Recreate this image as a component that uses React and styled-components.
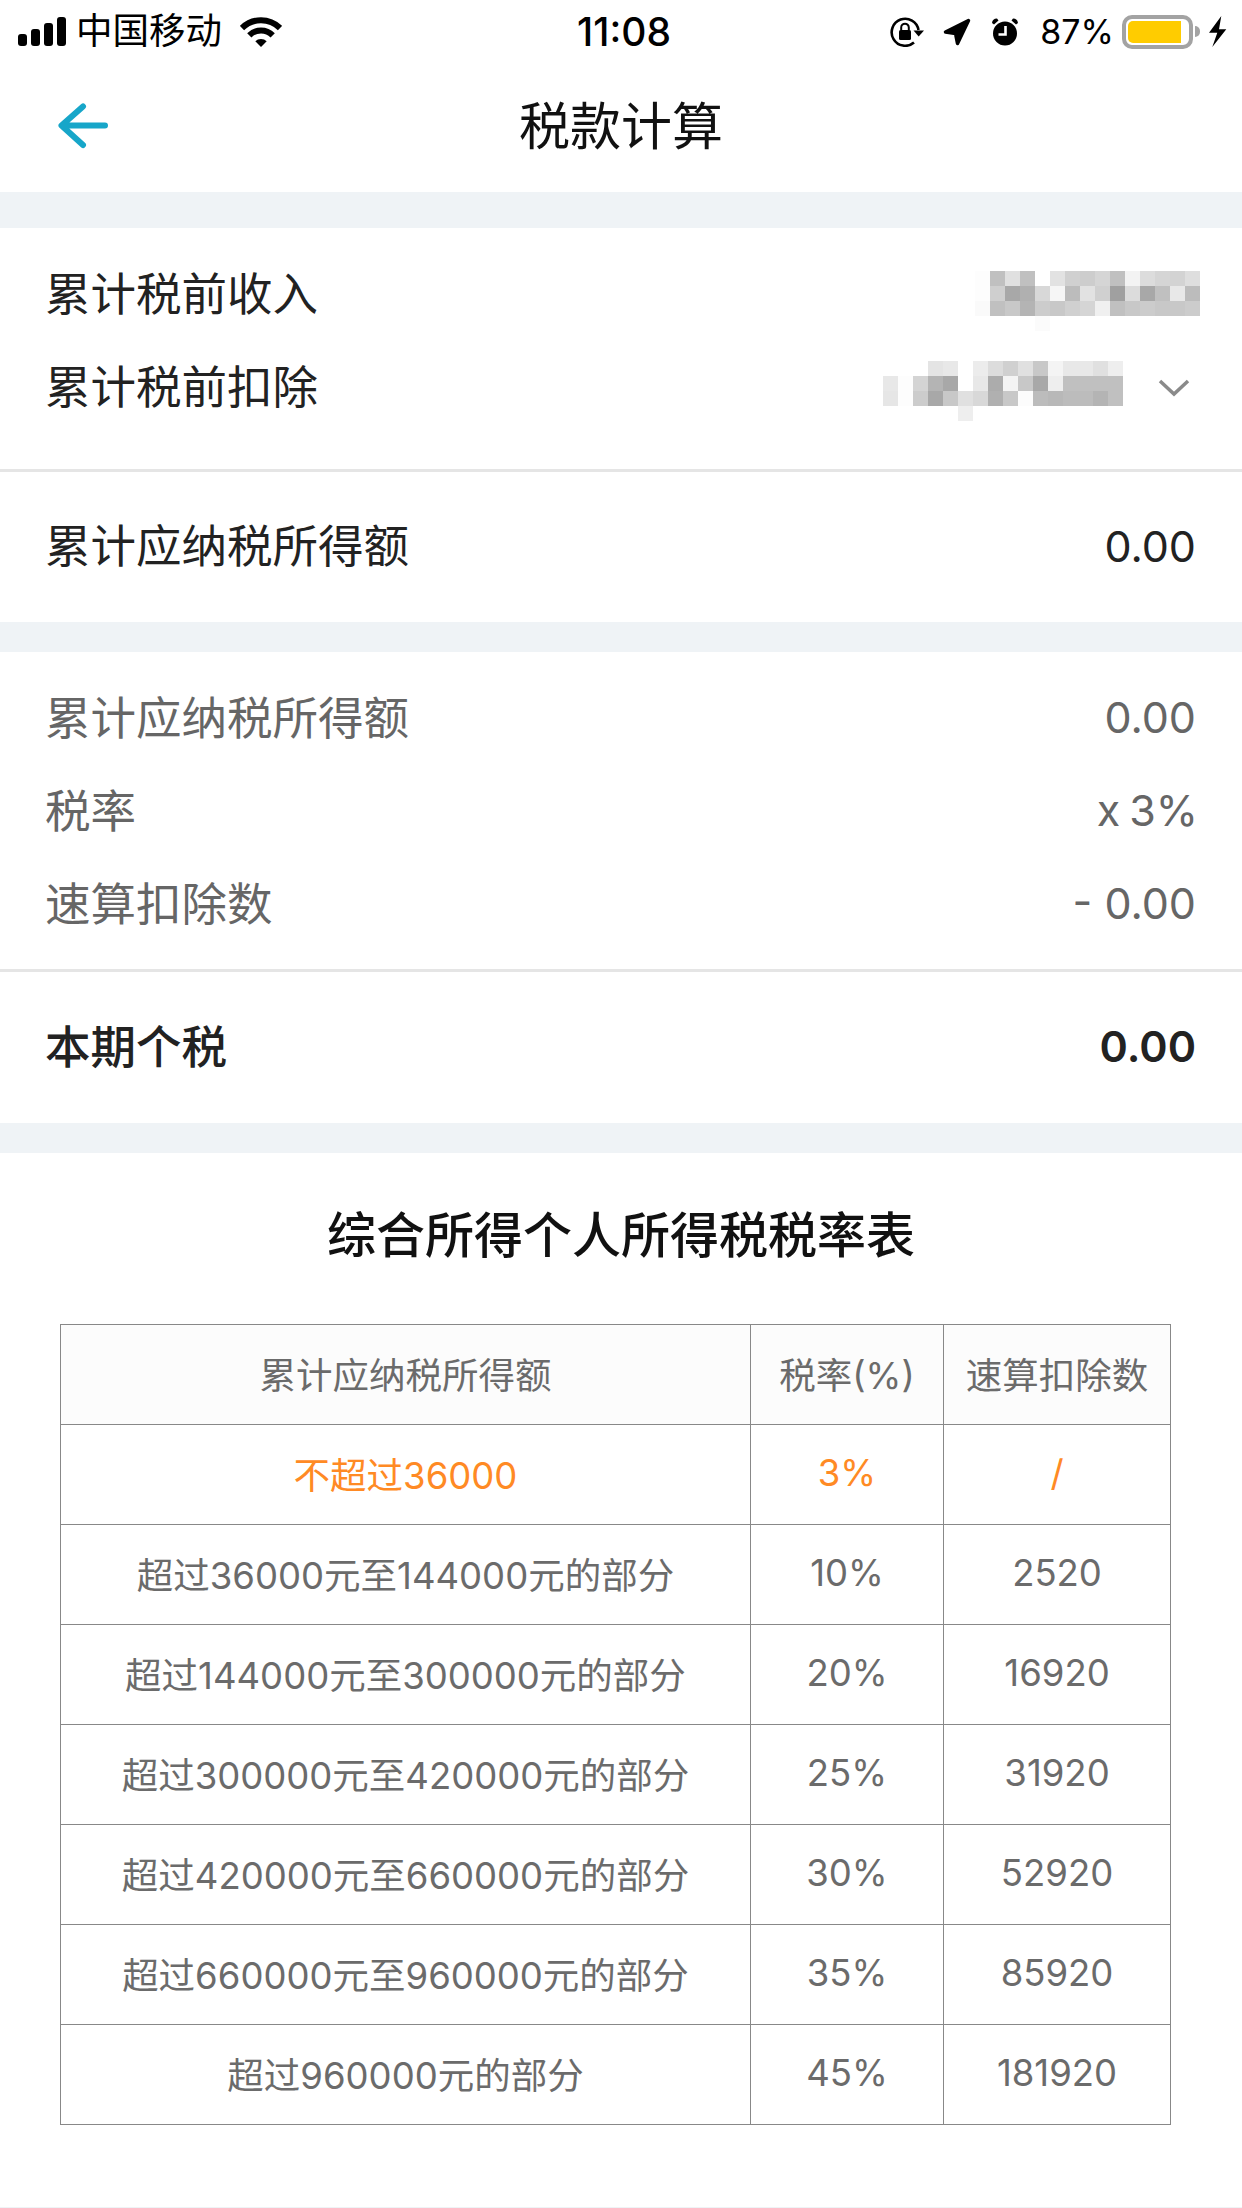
import styled, { createGlobalStyle } from 'styled-components';

const GlobalStyle = createGlobalStyle`
  html, body {
    margin: 0;
    padding: 0;
    background: #fff;
  }
  body {
    font-family: Inter, "Noto Sans CJK SC", sans-serif;
    color: #222;
  }
`;

const Page = styled.div`
  width: 1242px;
  height: 2208px;
  overflow: hidden;
  display: flex;
  flex-direction: column;
  background: #fff;
`;

const StatusBar = styled.div`
  box-sizing: border-box;
  height: 60px;
  padding-top: 3px;
  display: grid;
  grid-template-columns: 1fr auto 1fr;
  align-items: center;
  color: #000;
  font-size: 36px;
  line-height: 57px;
`;

const StatusLeft = styled.div`
  display: flex;
  align-items: center;
  padding-left: 18px;
`;

const StatusRight = styled.div`
  display: flex;
  align-items: center;
  justify-content: flex-end;
  padding-right: 15px;
`;

const Signal = styled.div`
  display: flex;
  align-items: flex-end;
  gap: 4px;
  height: 29px;
  margin-right: 10px;
`;

const SignalBar = styled.span`
  width: 9px;
  height: ${(p) => p.$h}px;
  border-radius: 3px;
  background: #000;
`;

const Carrier = styled.span`
  font-size: 36.5px;
  margin-right: 18px;
`;

const Clock = styled.span`
  font-weight: 500;
  font-size: 39px;
  margin-left: 6px;
`;

const Percent = styled.span`
  font-size: 34px;
  margin: 0 8px 0 21px;
`;

const StatusIcon = styled.svg`
  display: block;
  flex: none;
  margin-left: ${(p) => p.$ml || 0}px;
`;

const Battery = styled.div`
  display: flex;
  align-items: center;
`;

const BatteryShell = styled.div`
  box-sizing: border-box;
  width: 71px;
  height: 34px;
  border: 4px solid #a3a3a3;
  border-radius: 10px;
  padding: 2px;
`;

const BatteryFill = styled.div`
  width: ${(p) => p.$level}%;
  height: 100%;
  background: #ffcc00;
  border-radius: 5px 0 0 5px;
`;

const BatteryNub = styled.div`
  width: 5px;
  height: 11px;
  margin-left: 2px;
  background: #a3a3a3;
  border-radius: 0 5px 5px 0;
`;

const NavBar = styled.header`
  height: 132px;
  display: grid;
  grid-template-columns: 1fr auto 1fr;
  align-items: center;
`;

const BackButton = styled.button`
  border: none;
  background: none;
  padding: 0 0 3px 58px;
  display: flex;
  justify-self: start;
`;

const NavTitle = styled.h1`
  margin: 0;
  font-size: 51px;
  line-height: 134px;
  font-weight: 400;
  color: #111;
`;

const Gap = styled.div`
  flex: none;
  height: ${(p) => p.$h}px;
  background: #eff3f6;
`;

const Section = styled.section`
  padding: ${(p) => p.$pt || 0}px 46px ${(p) => p.$pb || 0}px;
  border-bottom: ${(p) => (p.$rule ? '3px solid #e5e5e5' : 'none')};
`;

const Row = styled.div`
  height: ${(p) => p.$h || 93}px;
  display: flex;
  align-items: center;
  justify-content: space-between;
  font-size: 45.5px;
  font-weight: ${(p) => (p.$strong ? 500 : 400)};
  color: ${(p) => (p.$muted ? '#666' : '#222')};
`;

const Label = styled.span`
  margin: 0 0 8px -1px;
`;

const Amount = styled.span`
  font-size: 43px;
  margin-bottom: 3px;
  font-weight: ${(p) => (p.$strong ? 600 : 400)};
  word-spacing: ${(p) => (p.$tight ? '-3px' : 'normal')};
  margin-right: ${(p) => (p.$tight ? '-2px' : '0')};
`;

const Masked = styled.div`
  display: flex;
  align-items: center;
`;

const Mosaic = styled.div`
  display: grid;
  grid-template-columns: repeat(${(p) => p.$cols}, 15px);
  grid-auto-rows: 15px;
  margin-top: ${(p) => p.$mt}px;
  margin-right: ${(p) => p.$mr || 0}px;
`;

const MosaicCell = styled.i`
  background: ${(p) => p.$c};
`;

const Chevron = styled.svg`
  display: block;
  margin: 0 6px 0 35px;
`;

const TableSection = styled.section`
  padding: 0 60px 82px;
  flex: 1;
`;

const TableTitle = styled.h2`
  margin: 0;
  height: 171px;
  line-height: 166px;
  text-align: center;
  font-size: 49px;
  font-weight: 500;
  color: #111;
`;

const RateTable = styled.table`
  width: 1110px;
  table-layout: fixed;
  border-collapse: collapse;
  font-size: 36.5px;
  color: #6b6b6b;
`;

const Cell = styled.td`
  box-sizing: border-box;
  height: 100px;
  padding: 0 0 3px;
  text-align: center;
  border: 1px solid #888;
  color: ${(p) => (p.$hot ? '#ff8a24' : 'inherit')};
`;

const HeadCell = styled(Cell).attrs({ as: 'th' })`
  font-weight: 400;
  background: #fcfcfc;
`;

const BLOCK_ONE = [
  'fd c0 e0 c0 ff e2 d0 cd d5 c0 f3 dc d5 d3 de',
  'fd cf a8 b0 d8 f6 bc e2 d0 a0 dc a8 c0 e8 bc',
  'fa c0 c8 b4 cc c8 d0 d5 f0 c0 c8 cc c8 c8 cc',
  '-- -- -- -- fb -- -- -- -- -- -- -- -- -- --',
];

const BLOCK_TWO = [
  '-- -- -- e4 e8 -- ec dc d0 e0 c8 f4 e8 e8 e0 ee',
  'e8 fd d4 b4 a8 -- e8 ac f4 c8 a8 ee c0 c0 c0 c0',
  'e6 fd cc a8 c8 e0 d8 b0 c8 fc bc b8 bc bc b4 c0',
  '-- -- -- -- -- ee -- -- -- -- -- -- -- -- -- --',
];

const RATES = [
  ['超过36000元至144000元的部分', '10%', '2520'],
  ['超过144000元至300000元的部分', '20%', '16920'],
  ['超过300000元至420000元的部分', '25%', '31920'],
  ['超过420000元至660000元的部分', '30%', '52920'],
  ['超过660000元至960000元的部分', '35%', '85920'],
  ['超过960000元的部分', '45%', '181920'],
];

const Pixels = ({ rows, mt, mr }) => (
  <Mosaic $cols={rows[0].split(' ').length} $mt={mt} $mr={mr}>
    {rows.flatMap((row, y) =>
      row.split(' ').map((v, x) => (
        <MosaicCell key={`${y}-${x}`} $c={v === '--' ? 'transparent' : `#${v}${v}${v}`} />
      )),
    )}
  </Mosaic>
);

const App = () => (
  <Page>
    <GlobalStyle />
    <StatusBar>
      <StatusLeft>
        <Signal>
          <SignalBar $h={12} />
          <SignalBar $h={17} />
          <SignalBar $h={23} />
          <SignalBar $h={29} />
        </Signal>
        <Carrier>中国移动</Carrier>
        <StatusIcon width="42" height="30" viewBox="0 0 42 30">
          <path d="M2 11 A27 27 0 0 1 40 11" fill="none" stroke="#000" strokeWidth="6" />
          <path d="M9.3 18.3 A16.5 16.5 0 0 1 32.7 18.3" fill="none" stroke="#000" strokeWidth="6" />
          <path d="M21 30 L15.3 24.3 A8 8 0 0 1 26.7 24.3 Z" fill="#000" />
        </StatusIcon>
      </StatusLeft>
      <Clock>11:08</Clock>
      <StatusRight>
        <StatusIcon width="35" height="30" viewBox="0 0 35 30">
          <path d="M28.5 13 A13.5 13.5 0 1 0 24 25.5" fill="none" stroke="#000" strokeWidth="2.6" />
          <path d="M23.5 13.5 H34 L28.7 19.5 Z" fill="#000" />
          <rect x="9" y="13" width="12" height="10" rx="1.5" fill="#000" />
          <path d="M11.2 13 V10.5 A3.8 3.8 0 0 1 18.8 10.5 V13" fill="none" stroke="#000" strokeWidth="2" />
        </StatusIcon>
        <StatusIcon $ml={18} width="28" height="28" viewBox="0 0 28 28">
          <path d="M25.5 2.5 L2.5 14 L12.5 15.5 L14.5 25.5 Z" fill="#000" stroke="#000" strokeWidth="3.5" strokeLinejoin="round" />
        </StatusIcon>
        <StatusIcon $ml={20} width="28" height="29" viewBox="0 0 28 29">
          <circle cx="14" cy="16.5" r="12" fill="#000" />
          <path d="M1 6 A5 5 0 0 1 6 1.5 L7.5 3.5 L3 7.5 Z M27 6 A5 5 0 0 0 22 1.5 L20.5 3.5 L25 7.5 Z" fill="#000" />
          <path d="M14.5 9 V17.5 H7.5" fill="none" stroke="#fff" strokeWidth="2.6" />
        </StatusIcon>
        <Percent>87%</Percent>
        <Battery>
          <BatteryShell>
            <BatteryFill $level={90} />
          </BatteryShell>
          <BatteryNub />
        </Battery>
        <StatusIcon $ml={9} width="18" height="31" viewBox="0 0 18 31">
          <path d="M12.3 0 L0 16.7 H8.3 L3.3 31 L17.3 13.3 H10 Z" fill="#000" />
        </StatusIcon>
      </StatusRight>
    </StatusBar>

    <NavBar>
      <BackButton aria-label="返回">
        <svg width="50" height="46" viewBox="0 0 50 46">
          <path d="M47 22.5 H4 M25 3.5 L3.5 22.5 L25 42" fill="none" stroke="#17a6c9" strokeWidth="6" strokeLinecap="round" strokeLinejoin="round" />
        </svg>
      </BackButton>
      <NavTitle>税款计算</NavTitle>
    </NavBar>

    <Gap $h={36} />

    <Section $pt={20} $pb={35} $rule>
      <Row>
        <Label>累计税前收入</Label>
        <Pixels rows={BLOCK_ONE} mt={12} mr={-4} />
      </Row>
      <Row>
        <Label>累计税前扣除</Label>
        <Masked>
          <Pixels rows={BLOCK_TWO} mt={6} />
          <Chevron width="32" height="20" viewBox="0 0 32 20">
            <path d="M2 3 L16 16 L30 3" fill="none" stroke="#8a8a8a" strokeWidth="3.5" />
          </Chevron>
        </Masked>
      </Row>
    </Section>

    <Section>
      <Row $h={150}>
        <Label>累计应纳税所得额</Label>
        <Amount>0.00</Amount>
      </Row>
    </Section>

    <Gap $h={30} />

    <Section $pt={20} $pb={18} $rule>
      <Row $muted>
        <Label>累计应纳税所得额</Label>
        <Amount>0.00</Amount>
      </Row>
      <Row $muted>
        <Label>税率</Label>
        <Amount $tight>x 3%</Amount>
      </Row>
      <Row $muted>
        <Label>速算扣除数</Label>
        <Amount>- 0.00</Amount>
      </Row>
    </Section>

    <Section>
      <Row $h={151} $strong>
        <Label>本期个税</Label>
        <Amount $strong>0.00</Amount>
      </Row>
    </Section>

    <Gap $h={30} />

    <TableSection>
      <TableTitle>综合所得个人所得税税率表</TableTitle>
      <RateTable>
        <colgroup>
          <col width="690" />
          <col width="193" />
          <col width="227" />
        </colgroup>
        <thead>
          <tr>
            <HeadCell>累计应纳税所得额</HeadCell>
            <HeadCell>税率(%)</HeadCell>
            <HeadCell>速算扣除数</HeadCell>
          </tr>
        </thead>
        <tbody>
          <tr>
            <Cell $hot>不超过36000</Cell>
            <Cell $hot>3%</Cell>
            <Cell $hot>/</Cell>
          </tr>
          {RATES.map(([range, rate, quick]) => (
            <tr key={range}>
              <Cell>{range}</Cell>
              <Cell>{rate}</Cell>
              <Cell>{quick}</Cell>
            </tr>
          ))}
        </tbody>
      </RateTable>
    </TableSection>

    <Gap $h={2} />
  </Page>
);

export default App;
